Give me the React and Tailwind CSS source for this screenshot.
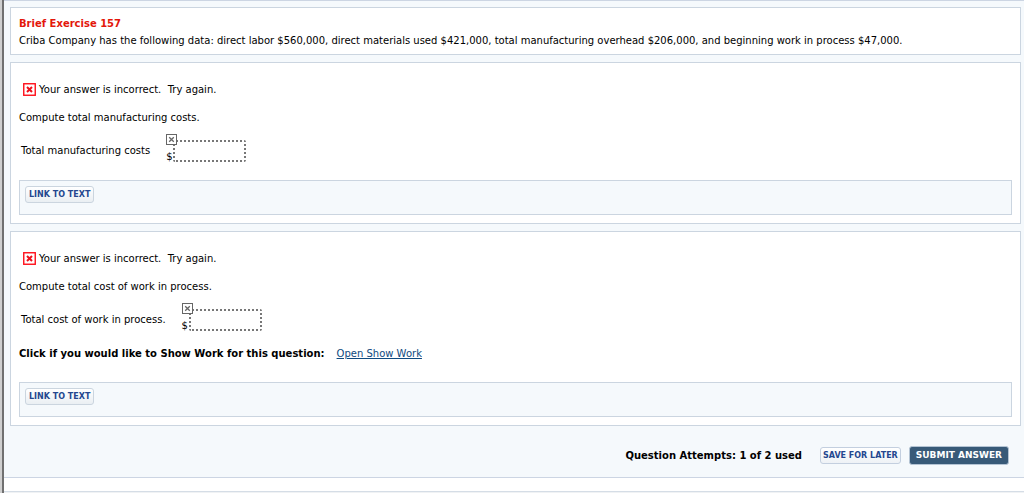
import { useState } from 'react';

function IncorrectNotice() {
  return (
    <div className="flex items-start gap-[3px] pl-1">
      <svg width="13" height="13" viewBox="0 0 13 13" className="mt-[3px] shrink-0" aria-hidden="true">
        <rect x="0.75" y="0.75" width="11.5" height="11.5" fill="#fff" stroke="#ff0f1a" strokeWidth="1.4" />
        <path d="M4 4 L9 9 M9 4 L4 9" stroke="#ee0f1a" strokeWidth="2" />
      </svg>
      <p className="whitespace-pre-wrap">Your answer is incorrect.  Try again.</p>
    </div>
  );
}

function AnswerField({ id, label, value, onChange }) {
  return (
    <div className="mt-[6px] flex items-center pl-[2px]">
      <label htmlFor={id} className="mr-4 pt-[6px]">{label}</label>
      <div className="relative flex h-7 items-end">
        <span className="w-[7px] leading-[10px]">$</span>
        <input
          id={id}
          type="text"
          value={value}
          onChange={onChange}
          className="h-[22px] w-[73px] rounded-[2px] border-2 border-dotted border-[#777] bg-white px-1 outline-none"
        />
        {/* Wrong answer marker on the corner of the field */}
        <svg width="11" height="11" viewBox="0 0 11 11" className="absolute top-0 left-0" aria-hidden="true">
          <rect x="0.5" y="0.5" width="10" height="10" fill="#fff" stroke="#666" />
          <path d="M3.2 3.2 L7.8 7.8 M7.8 3.2 L3.2 7.8" stroke="#666" strokeWidth="1.3" />
        </svg>
      </div>
    </div>
  );
}

function LinkToText() {
  return (
    <div className="mt-[18px] flex h-[35px] items-start border border-[#cbd5e0] bg-[#f5f9fc] px-[5px] pt-[5px]">
      <button
        type="button"
        className="h-[17px] rounded-[3px] border border-[#cbd5df] bg-linear-to-b from-white to-[#eaeff3] px-[3px] text-[8px] leading-[15px] font-bold text-[#24478f]"
      >
        LINK TO TEXT
      </button>
    </div>
  );
}

function App() {
  const [answers, setAnswers] = useState({ costs: '', process: '' });

  const handleChange = (name) => (e) => {
    const { value } = e.target;
    setAnswers(prev => ({ ...prev, [name]: value }));
  };

  return (
    <div className="flex min-h-screen bg-white font-['DejaVu_Sans',Verdana,sans-serif] text-[10px] leading-5 text-black">
      {/* Frame edge */}
      <div className="w-1 shrink-0 border-r-2 border-[#707070] bg-[#cfcfcf]" />

      <div className="flex min-w-0 flex-1 flex-col">
        <main className="border-y border-[#ccd5e3] bg-[#f5f9fc] pt-[6px] pr-[3px] pb-[11px] pl-[6px]">
          <section className="border border-[#cbd5e0] bg-white px-2 pt-[7px] pb-[5px] leading-[17px]">
            <h1 className="font-bold text-[#e3170a]">Brief Exercise 157</h1>
            <p>
              Criba Company has the following data: direct labor $560,000, direct materials used $421,000, total
              manufacturing overhead $206,000, and beginning work in process $47,000.
            </p>
          </section>

          <section className="mt-[7px] border border-[#cbd5e0] bg-white px-2 pt-[17px] pb-2">
            <IncorrectNotice />
            <p className="mt-2">Compute total manufacturing costs.</p>
            <AnswerField
              id="costs"
              label="Total manufacturing costs"
              value={answers.costs}
              onChange={handleChange('costs')}
            />
            <LinkToText />
          </section>

          <section className="mt-[7px] border border-[#cbd5e0] bg-white px-2 pt-[17px] pb-2">
            <IncorrectNotice />
            <p className="mt-2">Compute total cost of work in process.</p>
            <AnswerField
              id="process"
              label="Total cost of work in process."
              value={answers.process}
              onChange={handleChange('process')}
            />
            <div className="mt-[13px] flex gap-3">
              <strong>Click if you would like to Show Work for this question:</strong>
              <a href="#show-work" className="text-[#0f4a80] underline">Open Show Work</a>
            </div>
            <LinkToText />
          </section>

          <div className="mt-[19px] flex items-center justify-end pr-3">
            <strong className="mr-[18px] pt-px">Question Attempts: 1 of 2 used</strong>
            <button
              type="button"
              className="mr-2 h-[17px] rounded-[3px] border border-[#c3cfdf] bg-linear-to-b from-white to-[#eef2f6] px-[2px] text-[8px] leading-[15px] font-bold text-[#24478f]"
            >
              SAVE FOR LATER
            </button>
            <button
              type="button"
              className="h-[19px] rounded-[3px] border border-[#b4c4d4] bg-[#385a78] px-[6px] text-[9px] leading-[17px] font-bold text-white"
            >
              SUBMIT ANSWER
            </button>
          </div>
        </main>
        <div className="mt-[13px] flex-1 border-t border-[#d5dde6] bg-[#f0f2f4]" />
      </div>
    </div>
  );
}

export default App;
